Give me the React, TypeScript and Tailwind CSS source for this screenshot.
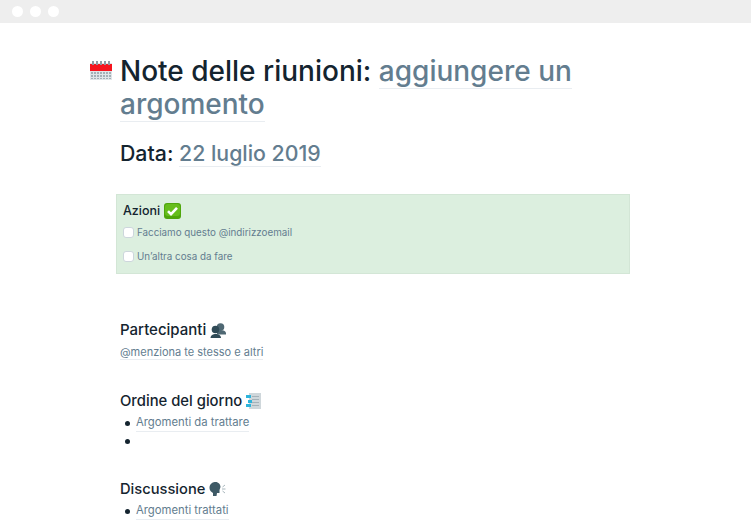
import React from 'react';

const CalendarIcon = () => (
  <svg width="22" height="19" viewBox="0 0 22 19" className="shrink-0">
    <rect x="0" y="2" width="22" height="17" fill="#dfe5e8" />
    <rect x="0" y="3" width="22" height="7" fill="#f5141e" />
    {[2, 6, 10, 14, 18].map((x) => (
      <rect key={x} x={x} y="0" width="2" height="4" fill="#8f9ba3" />
    ))}
    {[1, 4, 7, 10, 13, 16, 19].map((x) => (
      <rect key={x} x={x} y="11" width="2" height="7" fill="#a3afb6" />
    ))}
    <rect x="0" y="13" width="22" height="1" fill="#dfe5e8" />
    <rect x="0" y="16" width="22" height="1" fill="#dfe5e8" />
  </svg>
);

const CheckIcon = () => (
  <svg width="17" height="16" viewBox="0 0 17 16" className="shrink-0">
    <rect x="0" y="0" width="17" height="16" rx="3" fill="#4fa60c" />
    <rect x="1" y="1" width="15" height="12" rx="3" fill="#66bd1c" />
    <path d="M4 8.2 L7 11.2 L13 4.8" fill="none" stroke="#ffffff" strokeWidth="2.6" />
  </svg>
);

const PeopleIcon = () => (
  <svg width="16" height="15" viewBox="0 0 16 15" className="shrink-0">
    <circle cx="10.5" cy="4" r="3.8" fill="#4f6873" />
    <path d="M7 11.5 L7 8 C9 6.5 14 6.5 16 9.5 L16 11.5 Z" fill="#4f6873" />
    <circle cx="5.5" cy="6.5" r="3.8" fill="#2f4a56" />
    <path d="M0.5 15 C0.5 9.5 11 9.5 11 15 Z" fill="#2f4a56" />
  </svg>
);

const NotesIcon = () => (
  <svg width="15" height="16" viewBox="0 0 15 16" className="shrink-0">
    <rect x="3" y="0" width="12" height="16" fill="#cfd7db" />
    <rect x="6" y="3" width="7" height="1" fill="#a5b2b9" />
    <rect x="6" y="6" width="7" height="1" fill="#a5b2b9" />
    <rect x="6" y="9" width="7" height="1" fill="#a5b2b9" />
    <rect x="6" y="12" width="7" height="1" fill="#a5b2b9" />
    <rect x="0" y="2" width="5" height="3" fill="#2db4dc" />
    <rect x="2" y="7" width="4" height="3" fill="#2db4dc" />
    <rect x="0" y="11" width="5" height="3" fill="#2db4dc" />
  </svg>
);

const SpeakingIcon = () => (
  <svg width="17" height="14" viewBox="0 0 17 14" className="shrink-0">
    <path d="M0.5 6 C0.5 1 4.5 0 6.5 0 C9.5 0 11.5 2.5 11.5 5 L10.5 8 L10.5 11 L8 11 L7.5 14 L4 14 L4 11 C2 10 0.5 8 0.5 6 Z" fill="#3e5a66" />
    <path d="M16 3 L13.5 5 M13 7 L16.5 7 M13.5 9 L16 11" stroke="#a8b6bc" strokeWidth="1" fill="none" />
  </svg>
);

const Checkbox = () => (
  <span className="w-[11px] h-[11px] -mt-[2px] rounded-[3px] bg-white border border-[#cdd6dc] shrink-0" />
);

const Placeholder = ({ children }: { children: React.ReactNode }) => (
  <span className="text-[#637d8f] border-b border-[#e9edf1]">{children}</span>
);

const Bullet = ({ children }: { children: React.ReactNode }) => (
  <li className="flex items-center h-[18px]">
    <span className="w-[5px] h-[5px] ml-[5px] mr-[6px] rounded-full bg-[#14242f] shrink-0" />
    {children}
  </li>
);

export default function App() {
  return (
    <div className="w-[751px] h-[526px] overflow-hidden bg-white font-['Inter',sans-serif] text-[#14242f]">
      {/* Browser bar */}
      <div className="h-[23px] bg-[#eeeeee] flex items-center gap-[7px] pl-[12px]">
        <span className="w-[11px] h-[11px] rounded-full bg-white" />
        <span className="w-[11px] h-[11px] rounded-full bg-white" />
        <span className="w-[11px] h-[11px] rounded-full bg-white" />
      </div>

      <div className="pl-[90px] pt-[32px]">
        {/* Title */}
        <div className="flex w-[500px]">
          <div className="w-[30px] shrink-0 pt-[6px]">
            <CalendarIcon />
          </div>
          <h1 className="text-[28px] leading-[33px] font-medium">
            Note delle riunioni: <Placeholder>aggiungere un argomento</Placeholder>
          </h1>
        </div>

        <div className="pl-[30px]">
          <h2 className="mt-[17px] text-[21.3px] leading-[30px] font-medium">
            Data: <Placeholder>22 luglio 2019</Placeholder>
          </h2>
        </div>

        {/* Actions */}
        <div className="ml-[26px] mt-[26px] w-[514px] h-[80px] bg-[#dcefdf] border border-[#d3e6d6] pl-[6px] pt-[8px]">
          <div className="flex items-center gap-[4px] text-[12.5px] leading-[16px] font-medium">
            Azioni <CheckIcon />
          </div>
          <div className="mt-[7px] flex items-center gap-[3px] text-[9.8px] leading-[14px] text-[#637d8f]">
            <Checkbox /> Facciamo questo @indirizzoemail
          </div>
          <div className="mt-[10px] flex items-center gap-[3px] text-[9.8px] leading-[14px] text-[#637d8f]">
            <Checkbox /> Un’altra cosa da fare
          </div>
        </div>

        <div className="pl-[30px]">
          <div className="mt-[46px] flex items-center gap-[4px] text-[15px] leading-[20px] font-medium">
            Partecipanti <PeopleIcon />
          </div>
          <div className="mt-[4px] text-[11px] leading-[16px]">
            <Placeholder>@menziona te stesso e altri</Placeholder>
          </div>

          <div className="mt-[31px] flex items-center gap-[4px] text-[14.8px] leading-[20px] font-medium">
            Ordine del giorno <NotesIcon />
          </div>
          <ul className="mt-[3px] text-[11.3px]">
            <Bullet>
              <Placeholder>Argomenti da trattare</Placeholder>
            </Bullet>
            <Bullet>{null}</Bullet>
          </ul>

          <div className="mt-[29px] flex items-center gap-[4px] text-[14.7px] leading-[20px] font-medium">
            Discussione <SpeakingIcon />
          </div>
          <ul className="mt-[3px] text-[11.3px]">
            <Bullet>
              <Placeholder>Argomenti trattati</Placeholder>
            </Bullet>
          </ul>
        </div>
      </div>
    </div>
  );
}
